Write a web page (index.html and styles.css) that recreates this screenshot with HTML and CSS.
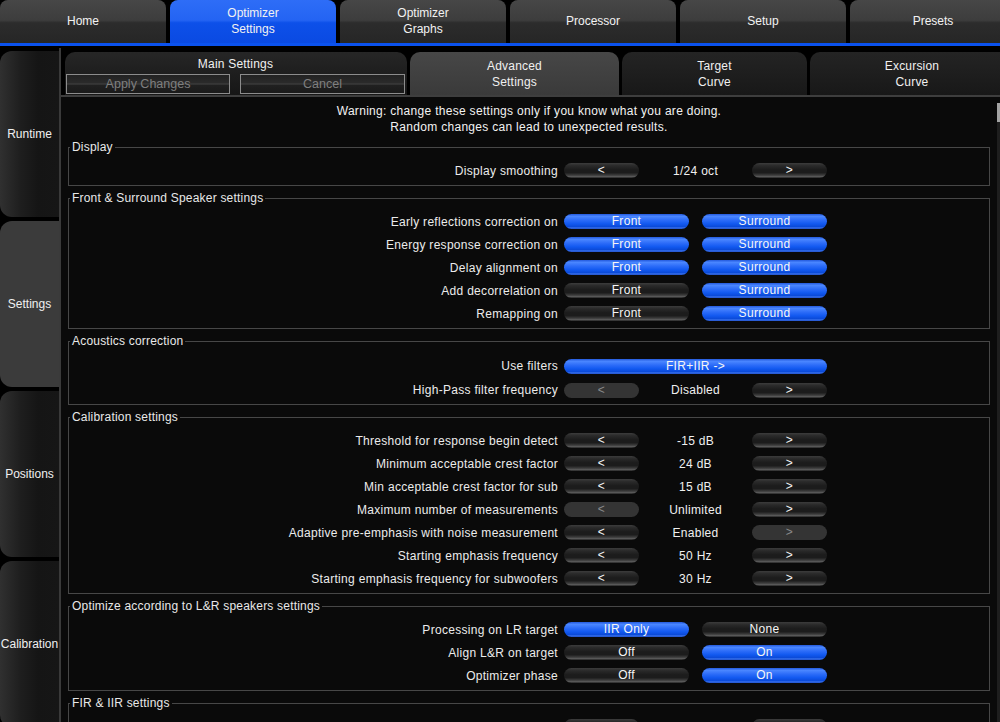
FILE: index.html
```html
<!DOCTYPE html>
<html lang="en">
<head>
<meta charset="utf-8">
<title>Optimizer Settings</title>
<link rel="stylesheet" href="styles.css">
</head>
<body>
<nav class="topbar">
  <div class="ttab">Home</div>
  <div class="ttab active">Optimizer<br>Settings</div>
  <div class="ttab">Optimizer<br>Graphs</div>
  <div class="ttab">Processor</div>
  <div class="ttab">Setup</div>
  <div class="ttab">Presets</div>
</nav>
<div class="main">
  <aside class="sidebar">
    <div class="stab">Runtime</div>
    <div class="stab active">Settings</div>
    <div class="stab">Positions</div>
    <div class="stab">Calibration</div>
  </aside>
  <section class="content">
    <div class="subtabs">
      <div class="subtab main-tab">
        <div class="mt-title">Main Settings</div>
        <div class="mt-buttons">
          <button class="flat apply">Apply Changes</button>
          <button class="flat cancel">Cancel</button>
        </div>
      </div>
      <div class="subtab adv active">Advanced<br>Settings</div>
      <div class="subtab target">Target<br>Curve</div>
      <div class="subtab exc">Excursion<br>Curve</div>
    </div>
    <div class="panel">
      <div class="scroll">
        <p class="warning">Warning: change these settings only if you know what you are doing.<br>Random changes can lead to unexpected results.</p>

        <div class="group">
          <div class="legend">Display</div>
          <div class="row"><span class="lbl">Display smoothing</span><div class="ctl"><span class="pill dark">&lt;</span><span class="val">1/24 oct</span><span class="pill dark">&gt;</span></div></div>
        </div>

        <div class="group">
          <div class="legend">Front &amp; Surround Speaker settings</div>
          <div class="row"><span class="lbl">Early reflections correction on</span><div class="ctl pair"><span class="pill blue">Front</span><span class="pill blue">Surround</span></div></div>
          <div class="row"><span class="lbl">Energy response correction on</span><div class="ctl pair"><span class="pill blue">Front</span><span class="pill blue">Surround</span></div></div>
          <div class="row"><span class="lbl">Delay alignment on</span><div class="ctl pair"><span class="pill blue">Front</span><span class="pill blue">Surround</span></div></div>
          <div class="row"><span class="lbl">Add decorrelation on</span><div class="ctl pair"><span class="pill dark">Front</span><span class="pill blue">Surround</span></div></div>
          <div class="row"><span class="lbl">Remapping on</span><div class="ctl pair"><span class="pill dark">Front</span><span class="pill blue">Surround</span></div></div>
        </div>

        <div class="group tall">
          <div class="legend">Acoustics correction</div>
          <div class="row"><span class="lbl">Use filters</span><div class="ctl wide"><span class="pill blue">FIR+IIR -&gt;</span></div></div>
          <div class="row"><span class="lbl">High-Pass filter frequency</span><div class="ctl"><span class="pill off">&lt;</span><span class="val">Disabled</span><span class="pill dark">&gt;</span></div></div>
        </div>

        <div class="group">
          <div class="legend">Calibration settings</div>
          <div class="row"><span class="lbl">Threshold for response begin detect</span><div class="ctl"><span class="pill dark">&lt;</span><span class="val">-15 dB</span><span class="pill dark">&gt;</span></div></div>
          <div class="row"><span class="lbl">Minimum acceptable crest factor</span><div class="ctl"><span class="pill dark">&lt;</span><span class="val">24 dB</span><span class="pill dark">&gt;</span></div></div>
          <div class="row"><span class="lbl">Min acceptable crest factor for sub</span><div class="ctl"><span class="pill dark">&lt;</span><span class="val">15 dB</span><span class="pill dark">&gt;</span></div></div>
          <div class="row"><span class="lbl">Maximum number of measurements</span><div class="ctl"><span class="pill off">&lt;</span><span class="val">Unlimited</span><span class="pill dark">&gt;</span></div></div>
          <div class="row"><span class="lbl">Adaptive pre-emphasis with noise measurement</span><div class="ctl"><span class="pill dark">&lt;</span><span class="val">Enabled</span><span class="pill off">&gt;</span></div></div>
          <div class="row"><span class="lbl">Starting emphasis frequency</span><div class="ctl"><span class="pill dark">&lt;</span><span class="val">50 Hz</span><span class="pill dark">&gt;</span></div></div>
          <div class="row"><span class="lbl">Starting emphasis frequency for subwoofers</span><div class="ctl"><span class="pill dark">&lt;</span><span class="val">30 Hz</span><span class="pill dark">&gt;</span></div></div>
        </div>

        <div class="group">
          <div class="legend">Optimize according to L&amp;R speakers settings</div>
          <div class="row"><span class="lbl">Processing on LR target</span><div class="ctl pair"><span class="pill blue">IIR Only</span><span class="pill dark">None</span></div></div>
          <div class="row"><span class="lbl">Align L&amp;R on target</span><div class="ctl pair"><span class="pill dark">Off</span><span class="pill blue">On</span></div></div>
          <div class="row"><span class="lbl">Optimizer phase</span><div class="ctl pair"><span class="pill dark">Off</span><span class="pill blue">On</span></div></div>
        </div>

        <div class="group">
          <div class="legend">FIR &amp; IIR settings</div>
          <div class="row"><span class="lbl">FIR filter length</span><div class="ctl"><span class="pill dark">&lt;</span><span class="val">16384</span><span class="pill dark">&gt;</span></div></div>
        </div>
      </div>
      <div class="scrollbar"><div class="thumb"></div></div>
    </div>
  </section>
</div>
</body>
</html>
```

FILE: styles.css
```css
html, body {
  margin: 0;
  padding: 0;
}

body {
  width: 1000px;
  height: 722px;
  overflow: hidden;
  background: #000;
  color: #ececec;
  font-family: "Liberation Sans", Arial, sans-serif;
  font-size: 12px;
  line-height: 16px;
}

/* ---------- top navigation ---------- */
.topbar {
  display: flex;
  gap: 4px;
  height: 43px;
  border-bottom: 3px solid #0b52ee;
  overflow: hidden;
}

.ttab {
  flex: 0 0 166px;
  box-sizing: border-box;
  display: flex;
  align-items: center;
  justify-content: center;
  text-align: center;
  padding-bottom: 1px;
  border-radius: 8px 8px 0 0;
  background: linear-gradient(#474747 0%, #3d3d3d 47%, #2c2c2c 53%, #262626 100%);
  color: #f2f2f2;
}

.ttab.active {
  background: linear-gradient(#2e6df7 0%, #2464f3 47%, #0d50e9 53%, #0a4ae2 100%);
}

/* ---------- main area ---------- */
.main {
  display: flex;
  height: 674px;
  margin-top: 2px;
}

.sidebar {
  flex: 0 0 59px;
  display: flex;
  flex-direction: column;
  gap: 4px;
  padding-top: 3px;
}

.stab {
  flex: 0 0 166px;
  display: flex;
  align-items: center;
  justify-content: center;
  white-space: nowrap;
  border-radius: 12px 0 0 12px;
  background: linear-gradient(to right, #303030 0%, #1e1e1e 35%, #151515 65%, #161616 100%);
  color: #f0f0f0;
}

.stab.active {
  background: #3b3b3b;
}

.content {
  flex: 1;
  min-width: 0;
  display: flex;
  flex-direction: column;
  border-left: 2px solid #3a3a3a;
}

/* ---------- sub tabs ---------- */
.subtabs {
  display: flex;
  gap: 3px;
  height: 43px;
  padding: 4px 0 0 4px;
  border-bottom: 2px solid #3e3e3e;
  overflow: hidden;
}

.subtab {
  flex: none;
  display: flex;
  align-items: center;
  justify-content: center;
  text-align: center;
  border-radius: 10px 10px 0 0;
  background: linear-gradient(#242424, #181818);
  color: #f0f0f0;
  letter-spacing: 0.2px;
}

.subtab.active {
  background: linear-gradient(#474747, #3a3a3a);
}

.main-tab {
  width: 342px;
  box-sizing: border-box;
  flex-direction: column;
  justify-content: flex-start;
  padding: 4px 2px 0 1px;
  background: linear-gradient(#262626, #161616);
}

.adv { width: 209px; }
.target { width: 185px; }
.exc { width: 204px; }

.mt-title {
  line-height: 16px;
}

.mt-buttons {
  display: flex;
  justify-content: space-between;
  width: 100%;
  margin-top: 2px;
}

.flat {
  box-sizing: border-box;
  height: 20px;
  padding: 0;
  border: 1px solid #8c8c8c;
  background: linear-gradient(#222 0%, #2a2a2a 42%, #3c3c3c 50%, #202020 58%, #1a1a1a 100%);
  color: #7f7f7f;
  font-family: inherit;
  font-size: 12.5px;
  line-height: 18px;
  letter-spacing: 0;
}

.apply { width: 164px; }
.cancel { width: 165px; }

/* ---------- settings panel ---------- */
.panel {
  flex: 1;
  min-height: 0;
  display: flex;
  overflow: hidden;
  background: #0a0a0a;
  letter-spacing: 0.3px;
}

.scroll {
  flex: 1;
  min-width: 0;
  padding: 6px 7px 0 7px;
}

.scrollbar {
  flex: 0 0 3px;
  margin-top: 6px;
  background: #1e1e1e;
}

.thumb {
  height: 19px;
  background: #a3a3a3;
}

.warning {
  margin: 0;
  text-align: center;
  line-height: 16px;
  color: #f2f2f2;
}

.group {
  display: flex;
  flex-direction: column;
  margin-top: 12px;
  padding-bottom: 3px;
  border: 1px solid #474747;
}

.legend {
  align-self: flex-start;
  margin: -8px 0 5px 1px;
  padding: 0 2px;
  line-height: 14px;
  background: #0a0a0a;
  color: #e8e8e8;
  white-space: nowrap;
  letter-spacing: 0.2px;
}

.group.tall {
  padding-bottom: 2px;
}

.group.tall .legend {
  margin-bottom: 6px;
}

.group.tall .row {
  height: 24px;
}

.row {
  display: grid;
  grid-template-columns: 489px 263px;
  column-gap: 6px;
  align-items: center;
  height: 23px;
}

.lbl {
  text-align: right;
  white-space: nowrap;
  color: #ececec;
}

.ctl {
  display: grid;
  grid-template-columns: 75px 1fr 75px;
  align-items: center;
}

.ctl.pair {
  grid-template-columns: 125px 1fr 125px;
}

.ctl.pair .pill:last-child {
  grid-column: 3;
}

.ctl.wide {
  grid-template-columns: 1fr;
}

.val {
  text-align: center;
  white-space: nowrap;
  color: #f0f0f0;
}

.pill {
  display: block;
  height: 15px;
  border-radius: 8px;
  text-align: center;
  line-height: 15px;
  font-size: 12px;
  color: #f6f6f6;
  white-space: nowrap;
}

.pill.dark {
  background: linear-gradient(#3c3c3c 0%, #2a2a2a 18%, #1c1c1c 45%, #1c1c1c 65%, #3e3e3e 82%, #575757 90%, #262626 100%);
}

.pill.blue {
  background: linear-gradient(#2359dc 0%, #4a86ff 16%, #2b6bf8 42%, #1259f0 65%, #0b4ad8 85%, #3d74ec 93%, #1846c0 100%);
}

.pill.off {
  background: #343434;
  color: #8a8a8a;
}
```
